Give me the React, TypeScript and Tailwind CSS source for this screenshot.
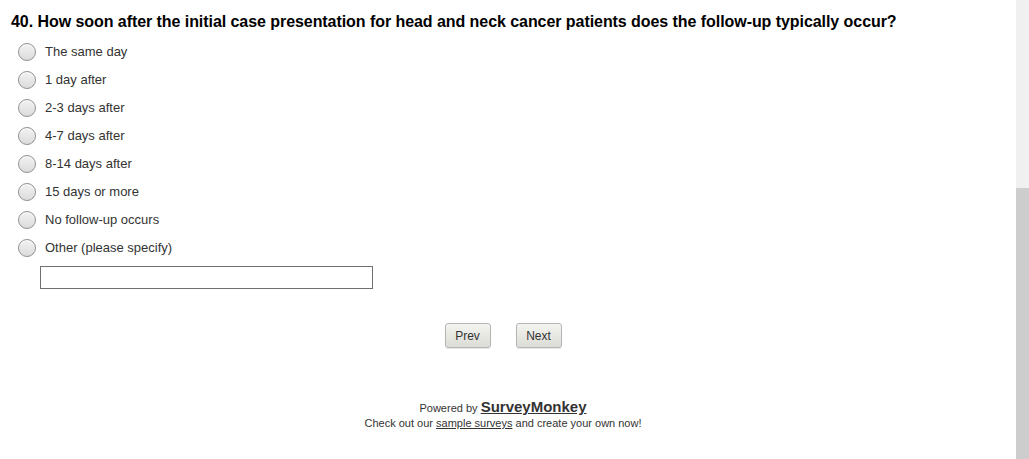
import React from "react";

const options = [
  "The same day",
  "1 day after",
  "2-3 days after",
  "4-7 days after",
  "8-14 days after",
  "15 days or more",
  "No follow-up occurs",
  "Other (please specify)",
];

function Radio() {
  return (
    <span className="w-[18px] h-[18px] rounded-full border border-[#8f8f8f] bg-gradient-to-b from-[#f2f2f2] to-[#dcdcdc] shadow-[inset_0_1px_1px_rgba(255,255,255,0.9)] shrink-0" />
  );
}

export default function App() {
  return (
    <div className="flex w-[1029px] h-[459px] bg-white overflow-hidden font-['Liberation_Sans',Arial,sans-serif]">
      <div className="flex-1 flex flex-col">
        <h1 className="pl-[11px] pt-[12px] text-[16px] leading-[20px] font-bold text-black tracking-[-0.06px]">
          40. How soon after the initial case presentation for head and neck cancer patients does the follow-up typically occur?
        </h1>
        <div className="flex flex-col pl-[18px] pt-[6px]">
          {options.map((o) => (
            <label key={o} className="flex items-center gap-[9px] h-[28px] text-[13px] text-[#333]">
              <Radio />
              <span>{o}</span>
            </label>
          ))}
        </div>
        <div className="pl-[40px] pt-[4px]">
          <div className="w-[333px] h-[23px] border border-[#707070] bg-white" />
        </div>
        <div className="flex justify-center gap-[25px] pt-[34px] pr-[10px]">
          <button className="w-[46px] h-[25px] rounded-[3px] border border-[#b5b5b5] bg-gradient-to-b from-[#f4f4f0] to-[#dcdcd6] text-[12px] text-[#333] shadow-[0_1px_1px_rgba(0,0,0,0.1)]">
            Prev
          </button>
          <button className="w-[46px] h-[25px] rounded-[3px] border border-[#b5b5b5] bg-gradient-to-b from-[#f4f4f0] to-[#dcdcd6] text-[12px] text-[#333] shadow-[0_1px_1px_rgba(0,0,0,0.1)]">
            Next
          </button>
        </div>
        <div className="flex flex-col items-center pt-[51px] pr-[10px] text-[#333]">
          <div className="text-[11px] leading-[16px]">
            Powered by{" "}
            <span className="text-[15px] font-bold underline">SurveyMonkey</span>
          </div>
          <div className="text-[11px] leading-[14px]">
            Check out our <span className="underline">sample surveys</span> and create your own now!
          </div>
        </div>
      </div>
      <div className="w-[13px] flex flex-col">
        <div className="h-[188px] bg-[#f0f0f0]" />
        <div className="flex-1 bg-[#cdcdcd]" />
      </div>
    </div>
  );
}
